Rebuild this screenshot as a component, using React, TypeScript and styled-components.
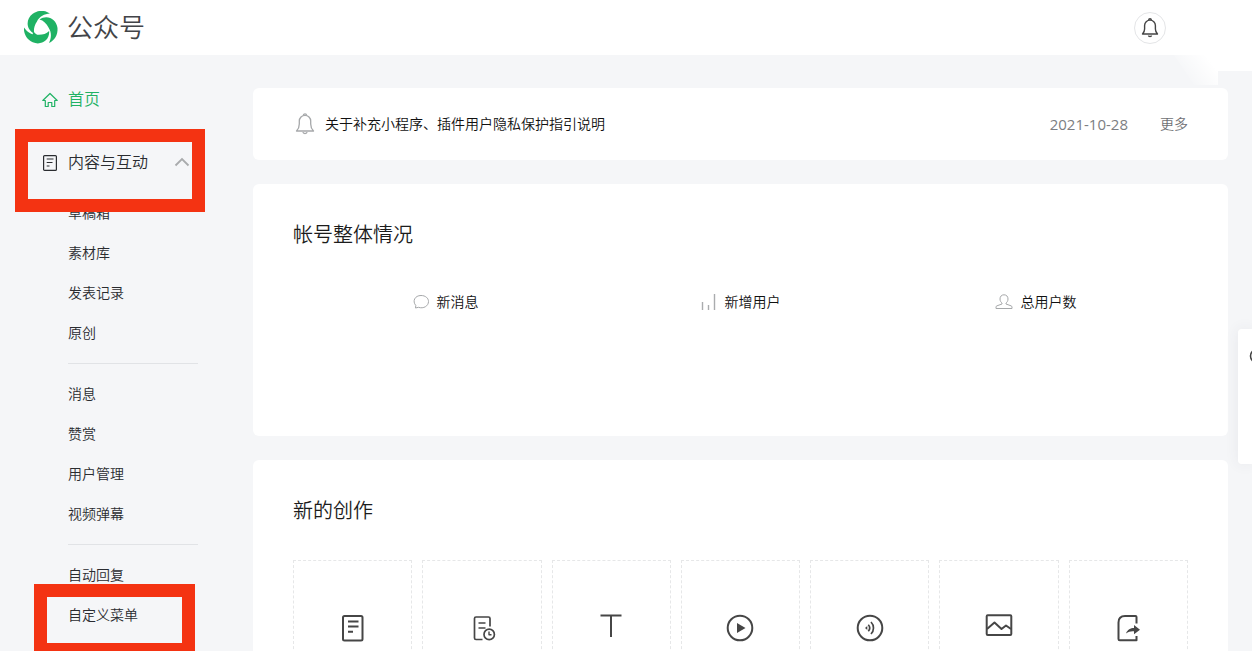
import React from "react";
import styled, { createGlobalStyle, css } from "styled-components";

const GlobalStyle = createGlobalStyle`
  *, *::before, *::after { box-sizing: border-box; }
  body {
    margin: 0;
    background: #f5f6f8;
    color: #2b2d30;
    font-family: "Liberation Sans", "Noto Sans CJK SC", sans-serif;
    font-size: 14px;
    line-height: 20px;
  }
  h1, h2, p, ul { margin: 0; padding: 0; font-weight: 350; }
  ul { list-style: none; }
  svg { display: block; flex: none; }
`;

const green = "#1fb264";
const alertRed = "#f43312";

const Shell = styled.div`
  position: relative;
  display: flex;
  flex-direction: column;
  height: 100vh;
  overflow: hidden;
`;

const Header = styled.header`
  display: flex;
  flex: none;
  align-items: center;
  justify-content: space-between;
  height: 55px;
  padding: 0 86px 0 24px;
  background: #fff;
`;

const Brand = styled.a`
  display: flex;
  align-items: center;
  gap: 9px;
  color: #424448;
  font-size: 26px;
  font-weight: 350;
  line-height: 34px;
  text-decoration: none;
`;

const BellButton = styled.button`
  display: grid;
  place-items: center;
  width: 32px;
  height: 32px;
  padding: 0;
  border: 1px solid #e4e5e7;
  border-radius: 50%;
  background: #fff;
  color: #444;
`;

const HeaderGlow = styled.svg`
  position: absolute;
  top: 55px;
  right: 0;
`;

const Body = styled.div`
  display: grid;
  grid-template-columns: 253px minmax(0, 1fr);
  flex: 1;
  min-height: 0;
`;

const Sidebar = styled.nav`
  padding: 24px 55px 0 42px;
`;

const itemColor = css<{ $active?: boolean }>`
  color: ${(p) => (p.$active ? green : "#2a2c30")};
`;

const TopItem = styled.a<{ $active?: boolean }>`
  ${itemColor}
  display: flex;
  align-items: center;
  gap: 10px;
  height: 40px;
  padding-top: 2px;
  font-size: 16px;
  font-weight: 350;
  text-decoration: none;
`;

const SectionToggle = styled.button`
  display: flex;
  align-items: center;
  gap: 10px;
  width: 148px;
  height: 40px;
  margin: 23px 0 11px;
  padding: 2px 0 0;
  border: 0;
  background: none;
  color: #2a2c30;
  font: inherit;
  font-size: 16px;
  font-weight: 350;
  text-align: left;

  svg:last-child { margin-left: auto; }
`;

const SubList = styled.ul`
  margin-left: 26px;

  & + & {
    margin-top: 10px;
    padding-top: 10px;
    border-top: 1px solid #e1e3e6;
  }
`;

const SubLink = styled.a`
  display: flex;
  align-items: center;
  height: 40px;
  color: #2a2c30;
  font-weight: 350;
  text-decoration: none;
`;

const Marked = styled.div`
  position: relative;
`;

const Marker = styled.span<{ $top: number; $left: number; $width: number; $height: number }>`
  position: absolute;
  z-index: 2;
  top: ${(p) => p.$top}px;
  left: ${(p) => p.$left}px;
  width: ${(p) => p.$width}px;
  height: ${(p) => p.$height}px;
  border: 13px solid ${alertRed};
  pointer-events: none;
`;

const Main = styled.main`
  display: flex;
  flex-direction: column;
  gap: 24px;
  min-height: 0;
  padding: 33px 24px 0 0;
`;

const Card = styled.section`
  flex: none;
  padding: 0 40px;
  border-radius: 6px;
  background: #fff;
`;

const Notice = styled(Card)`
  display: flex;
  align-items: center;
  height: 72px;
  gap: 8px;
`;

const NoticeLink = styled.a`
  flex: 1;
  color: #111;
  font-weight: 350;
  text-decoration: none;
`;

const NoticeDate = styled.time`
  color: #7c7e82;
  font-family: "Open Sans", "Noto Sans", sans-serif;
  font-size: 15px;
`;

const MoreLink = styled.a`
  margin-left: 24px;
  color: #6f7175;
  font-weight: 350;
  text-decoration: none;
`;

const Overview = styled(Card)`
  min-height: 252px;
  padding-top: 36px;
`;

const Creation = styled(Card)`
  padding-top: 36px;
  padding-bottom: 40px;
`;

const CardTitle = styled.h2`
  color: #1c1c1c;
  font-size: 20px;
  line-height: 30px;
`;

const Stats = styled.div`
  display: grid;
  grid-template-columns: repeat(3, 1fr);
  margin-top: 42px;
  padding: 0 5px;
`;

const Stat = styled.div`
  display: flex;
  align-items: center;
  justify-content: center;
  gap: 8px;
  color: #111;
  font-weight: 350;
`;

const Tiles = styled.div`
  display: grid;
  grid-template-columns: repeat(7, minmax(0, 1fr));
  gap: 10px;
  margin-top: 34px;
`;

const Tile = styled.button`
  display: flex;
  justify-content: center;
  height: 160px;
  padding: 51px 0 0;
  border: 1px dashed #e6e7e8;
  background: #fff;
  color: #464646;
`;

const FloatPanel = styled.aside`
  position: absolute;
  top: 329px;
  right: 0;
  width: 14px;
  height: 135px;
  padding: 19px 0 0 11px;
  overflow: hidden;
  border-radius: 4px 0 0 4px;
  background: #fff;
  color: #444;
`;

const FloatShadow = styled.div`
  position: absolute;
  top: 329px;
  right: 0;
  width: 14px;
  height: 135px;
  border-radius: 4px 0 0 4px;
  box-shadow: 0 0 14px rgba(60, 70, 90, 0.08);
`;

const Stroke = ({
  size,
  box = size,
  width = 1,
  children,
}: {
  size: number;
  box?: number;
  width?: number;
  children: React.ReactNode;
}) => (
  <svg
    width={size}
    height={size}
    viewBox={`0 0 ${box} ${box}`}
    fill="none"
    stroke="currentColor"
    strokeWidth={width}
    strokeLinejoin="round"
    aria-hidden="true"
  >
    {children}
  </svg>
);

const swoosh =
  "M-1.500 -8.500C6 -14 15.500 -9 16.500 0C17 7 13.500 12.500 8 15C10.500 10 10.800 4.500 7.500 -.5C5.500 -4.500 2.500 -7.500 -1.500 -8.500Z";

const Logo = () => (
  <svg width="34" height="34" viewBox="-17 -17 34 34" fill={green} aria-hidden="true">
    {[0, 120, 240].map((angle) => (
      <path key={angle} d={swoosh} transform={`rotate(${angle})`} />
    ))}
    <path d="M-8 3.500L-8.500 11L-2 8.500Z" />
  </svg>
);

const Bell = ({ size, width }: { size: number; width: number }) => (
  <Stroke size={size} box={20} width={width}>
    <path d="M2.500 16C4 14.500 4.600 13 4.600 11V7.500A5.400 5.400 0 0 1 15.400 7.500V11C15.400 13 16 14.500 17.500 16Z" />
    <path d="M8.700 2A1.300 1.300 0 0 1 11.300 2M8.500 17.500A1.500 1 0 0 0 11.500 17.500" />
  </Stroke>
);

const HomeIcon = () => (
  <Stroke size={16} width={1.2}>
    <path d="M.8 8.500L8 1.500L15.200 8.500H12.700V14.500H9.800V10.500H6.200V14.500H3.300V8.500Z" />
  </Stroke>
);

const DocIcon = () => (
  <Stroke size={16} width={1.2}>
    <rect x="1.600" y=".6" width="12.800" height="14.800" rx="1" />
    <path d="M4.700 4H11.500M4.700 7.500H10.500M4.700 11H7.500" />
  </Stroke>
);

const tiles: { label: string; art: React.ReactNode }[] = [
  {
    label: "图文消息",
    art: (
      <>
        <rect x="6" y="4" width="19.500" height="24.500" rx="1.500" />
        <path d="M11 9.500H21.500M11 14.500H21.500M11 19.700H16" />
      </>
    ),
  },
  {
    label: "选择已有图文",
    art: (
      <>
        <path d="M16.500 27.500H10A1.500 1.500 0 0 1 8.500 26V6.500A1.500 1.500 0 0 1 10 5H22.500A1.500 1.500 0 0 1 24 6.500V14.500" strokeWidth="1.700" />
        <path d="M12.500 11H19.500M12.500 16H19.500" strokeWidth="1.700" />
        <circle cx="23.200" cy="22.400" r="5.200" strokeWidth="1.700" />
        <path d="M23 19.500V22.700H25.500" strokeWidth="1.400" />
      </>
    ),
  },
  { label: "文字消息", art: <path d="M5.500 3.500H26.500M16 3.500V25" strokeWidth="2" /> },
  {
    label: "视频消息",
    art: (
      <>
        <circle cx="16" cy="16" r="12.300" />
        <path d="M13 11L21.500 16L13 21Z" fill="currentColor" stroke="none" />
      </>
    ),
  },
  {
    label: "音频消息",
    art: (
      <>
        <circle cx="16" cy="16" r="12.300" />
        <path d="M11 16L13.300 14V18Z" fill="currentColor" stroke="none" />
        <path d="M14.300 12.700A5 5 0 0 1 14.300 19.300M17 10A8.500 8.500 0 0 1 17 22" strokeWidth="1.700" />
      </>
    ),
  },
  {
    label: "图片消息",
    art: (
      <>
        <rect x="3.700" y="3.300" width="24.600" height="19.700" rx="1" />
        <path d="M4 17L11.500 10.500L18.500 17L23 13.500L28 17" />
      </>
    ),
  },
  {
    label: "转载",
    art: (
      <>
        <path d="M24.500 11.500V5A1 1 0 0 0 23.500 4H13C9 4 6.500 6.500 6.500 10.500V27A1.300 1.300 0 0 0 7.800 28.300H24.500V24" />
        <path
          d="M14 21.500C15.500 17.500 18.500 16 22 16V13L28 17.800L22 22.300V19.300C19 19 16.500 19.700 14 21.500Z"
          fill="currentColor"
          stroke="none"
        />
      </>
    ),
  },
];

const menuGroups = [
  ["草稿箱", "素材库", "发表记录", "原创"],
  ["消息", "赞赏", "用户管理", "视频弹幕"],
  ["自动回复", "自定义菜单"],
];

export default function App() {
  return (
    <>
      <GlobalStyle />
      <Shell>
        <Header>
          <Brand href="#">
            <Logo />
            公众号
          </Brand>
          <BellButton aria-label="通知">
            <Bell size={20} width={1.4} />
          </BellButton>
        </Header>

        <Body>
          <Sidebar>
            <TopItem href="#" $active>
              <HomeIcon />
              首页
            </TopItem>
            <Marked>
              <SectionToggle aria-expanded="true">
                <DocIcon />
                内容与互动
                <svg width="16" height="16" viewBox="0 0 16 16" fill="none" stroke="#a9abad" strokeWidth="1.800" aria-hidden="true">
                  <path d="M1.500 10.500L8 4L14.500 10.500" />
                </svg>
              </SectionToggle>
              <Marker $top={-13} $left={-27} $width={190} $height={83} />
            </Marked>
            {menuGroups.map((group) => (
              <SubList key={group[0]}>
                {group.map((name) => (
                  <li key={name}>
                    {name === "自定义菜单" ? (
                      <Marked>
                        <SubLink href="#">{name}</SubLink>
                        <Marker $top={-11} $left={-34} $width={161} $height={72} />
                      </Marked>
                    ) : (
                      <SubLink href="#">{name}</SubLink>
                    )}
                  </li>
                ))}
              </SubList>
            ))}
          </Sidebar>

          <Main>
            <Notice>
              <svg width="24" height="24" viewBox="0 0 24 24" fill="none" stroke="#a6a8aa" strokeWidth="1.300" aria-hidden="true">
                <path d="M3.500 19C5.500 17 6.300 15 6.300 12V9A5.700 5.700 0 0 1 17.700 9V12C17.700 15 18.500 17 20.500 19Z" strokeLinejoin="round" />
                <path d="M10.500 3A1.500 1.200 0 0 1 13.500 3M10 20A2 1.500 0 0 0 14 20" />
              </svg>
              <NoticeLink href="#">关于补充小程序、插件用户隐私保护指引说明</NoticeLink>
              <NoticeDate dateTime="2021-10-28">2021-10-28</NoticeDate>
              <MoreLink href="#">更多</MoreLink>
            </Notice>

            <Overview>
              <CardTitle>帐号整体情况</CardTitle>
              <Stats>
                <Stat>
                  <svg width="16" height="16" viewBox="0 0 16 16" fill="none" stroke="#a6a8aa" aria-hidden="true">
                    <path d="M2.500 14L2.800 11.500C-1 7 2 1.500 8 1.500C12.500 1.500 15.500 4.200 15.500 7.500C15.500 12 10.500 15 5.500 13.300Z" strokeLinejoin="round" />
                  </svg>
                  新消息
                </Stat>
                <Stat>
                  <svg width="16" height="18" viewBox="0 0 16 18" fill="none" stroke="#aaacae" strokeWidth="1.400" aria-hidden="true">
                    <path d="M1.500 9V17M7.500 12V17M13.500 1V17" />
                  </svg>
                  新增用户
                </Stat>
                <Stat>
                  <svg width="18" height="16" viewBox="0 0 18 16" fill="none" stroke="#a6a8aa" strokeLinejoin="round" aria-hidden="true">
                    <path d="M9 .8C6.500 .8 5 2.500 5 5C5 7 6 8.300 7 9V10L2 11.800C1.300 12 1 12.500 1 13V14.500H17V13C17 12.500 16.700 12 16 11.800L11 10V9C12 8.300 13 7 13 5C13 2.500 11.500 .8 9 .8Z" />
                  </svg>
                  总用户数
                </Stat>
              </Stats>
            </Overview>

            <Creation>
              <CardTitle>新的创作</CardTitle>
              <Tiles>
                {tiles.map((t) => (
                  <Tile key={t.label} aria-label={t.label}>
                    <Stroke size={32} width={2}>
                      {t.art}
                    </Stroke>
                  </Tile>
                ))}
              </Tiles>
            </Creation>
          </Main>
        </Body>

        <HeaderGlow width="78" height="30" viewBox="0 0 78 30" aria-hidden="true">
          <defs>
            <linearGradient id="glow" x1="0" y1="0.300" x2="1" y2="0">
              <stop offset="0" stopColor="#fff" stopOpacity="0" />
              <stop offset="0.450" stopColor="#fff" />
            </linearGradient>
          </defs>
          <path d="M0 0H78V16H44V30H20Z" fill="url(#glow)" />
        </HeaderGlow>
        <FloatShadow />
        <FloatPanel>
          <Stroke size={16} width={1.6}>
            <circle cx="8" cy="8" r="6.500" />
          </Stroke>
        </FloatPanel>
      </Shell>
    </>
  );
}
